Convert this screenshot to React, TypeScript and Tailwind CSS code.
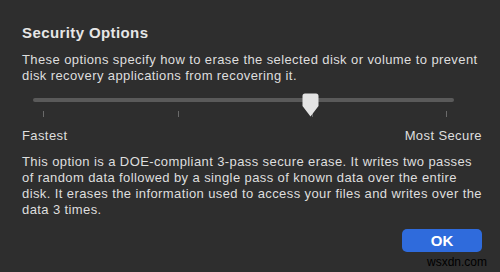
const ticks = [10, 145, 279, 413];

export default function App() {
  return (
    <div
      className="w-[500px] h-[272px] bg-[#2e2e2e] text-[#dedede] pl-[22px] pr-[18px] pt-[24px] relative overflow-hidden"
      style={{ fontFamily: '"Liberation Sans", Arial, sans-serif' }}
    >
      <h1 className="text-[15px] font-bold leading-[18px] tracking-[0.4px] text-[#e6e6e6]">Security Options</h1>
      <p className="mt-[10px] text-[13px] leading-[16px] tracking-[0.4px]">
        These options specify how to erase the selected disk or volume to prevent
        <br />
        disk recovery applications from recovering it.
      </p>

      {/* slider */}
      <div className="relative ml-[11px] w-[421px] h-[26px] mt-[8px]">
        <div className="absolute left-0 right-0 top-[6px] h-[4px] rounded-full bg-[#5a5a5a]" />
        {ticks.map(t => (
          <div key={t} className="absolute top-[19px] w-[1px] h-[6px] bg-[#6a6a6a]" style={{ left: t }} />
        ))}
        <svg className="absolute left-[269px] top-[1px]" width="17" height="24" viewBox="0 0 17 24">
          <path d="M3 0.5 H14 A2.5 2.5 0 0 1 16.5 3 V13 L8.5 23.5 L0.5 13 V3 A2.5 2.5 0 0 1 3 0.5 Z" fill="#e4e4e4" />
        </svg>
      </div>

      <div className="flex justify-between mt-[10px] text-[13px] leading-[16px] tracking-[0.4px]">
        <span>Fastest</span>
        <span>Most Secure</span>
      </div>

      <p className="mt-[10px] text-[13px] leading-[16px] tracking-[0.4px]">
        This option is a DOE-compliant 3-pass secure erase. It writes two passes
        <br />
        of random data followed by a single pass of known data over the entire
        <br />
        disk. It erases the information used to access your files and writes over the
        <br />
        data 3 times.
      </p>

      <div className="flex justify-end mt-[11px]">
        <button className="w-[80px] h-[23px] rounded-[5px] bg-[#2f6bdc] text-white text-[15px] leading-[23px] font-semibold">
          OK
        </button>
      </div>
      <span className="absolute left-[427px] top-[255px] text-[12px] leading-[14px] text-black">wsxdn.com</span>
    </div>
  );
}
